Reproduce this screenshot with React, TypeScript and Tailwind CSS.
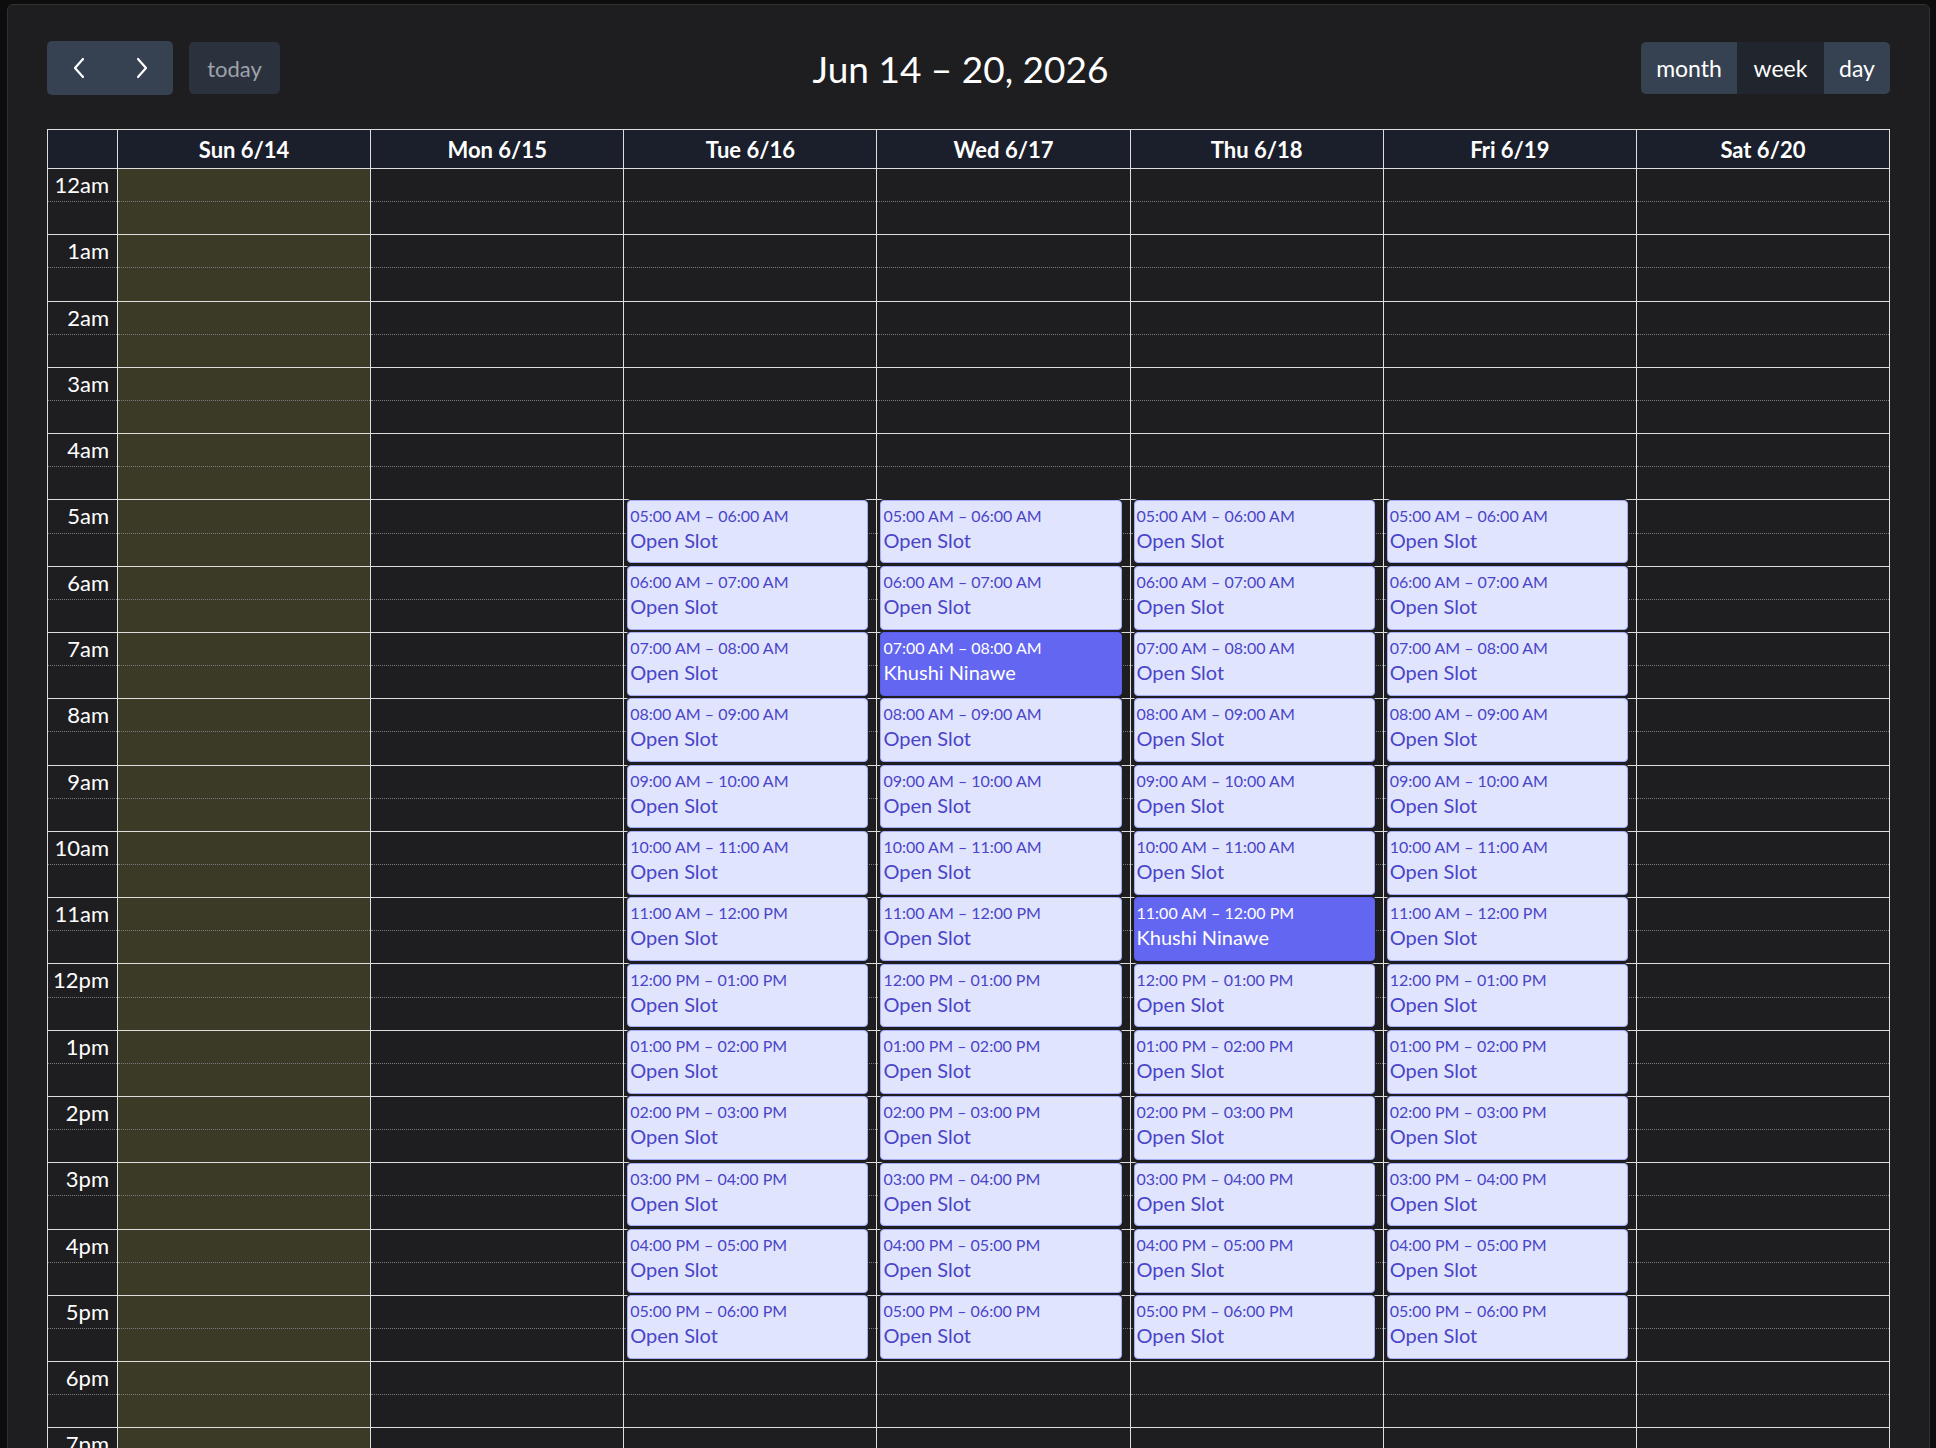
import React from "react";

const days = ["Sun 6/14", "Mon 6/15", "Tue 6/16", "Wed 6/17", "Thu 6/18", "Fri 6/19", "Sat 6/20"];
const SLOT = 33.15;
const HOUR = SLOT * 2;

function hourLabel(h: number) {
  const n = h % 12 === 0 ? 12 : h % 12;
  return `${n}${h < 12 ? "am" : "pm"}`;
}
function fmt(h: number) {
  const n = h % 12 === 0 ? 12 : h % 12;
  return `${String(n).padStart(2, "0")}:00 ${h < 12 || h === 24 ? "AM" : "PM"}`;
}

type Ev = { h: number; title: string; booked: boolean };

function eventsFor(col: number): Ev[] {
  if (col < 2 || col > 5) return [];
  const list: Ev[] = [];
  for (let h = 5; h <= 17; h++) {
    const booked = (col === 3 && h === 7) || (col === 4 && h === 11);
    list.push({ h, title: booked ? "Khushi Ninawe" : "Open Slot", booked });
  }
  return list;
}

function Slots() {
  const rows = [];
  for (let i = 0; i < 48; i++) {
    rows.push(
      <div
        key={i}
        className={
          i % 2 === 0
            ? "border-b border-dotted border-[#7a7a7a]"
            : "border-b border-solid border-[#dddddd]"
        }
        style={{ height: SLOT }}
      />
    );
  }
  return <>{rows}</>;
}

function Chevron({ dir }: { dir: "left" | "right" }) {
  return (
    <svg width="16" height="24" viewBox="0 0 16 24" fill="none">
      <path
        d={dir === "left" ? "M12 3 L4 12 L12 21" : "M4 3 L12 12 L4 21"}
        stroke="white"
        strokeWidth="2.2"
        strokeLinecap="round"
        strokeLinejoin="round"
      />
    </svg>
  );
}

export default function App() {
  return (
    <div
      className="min-h-screen bg-[#0d0d0e] pt-[4px] pl-[7px] pr-[6px]"
      style={{ fontFamily: "Lato, 'Open Sans', sans-serif" }}
    >
      <div className="min-h-[1444px] rounded-t-[6px] border border-[#313133] bg-[#1e1e20] pl-[39px] pr-[39px] pt-[36px] text-white">
        {/* Toolbar */}
        <div className="flex h-[54px] items-center justify-between">
          <div className="flex items-center gap-[16px]">
            <div className="flex h-[54px] w-[126px] overflow-hidden rounded-[5px] bg-[#364152]">
              <button className="flex w-1/2 items-center justify-center">
                <Chevron dir="left" />
              </button>
              <button className="flex w-1/2 items-center justify-center">
                <Chevron dir="right" />
              </button>
            </div>
            <button className="flex h-[52px] w-[91px] items-center justify-center rounded-[5px] bg-[#2c323d] text-[22px] text-[#9ea3ab]">
              today
            </button>
          </div>
          <h2 className="text-[37px] font-normal leading-none text-white">Jun 14 – 20, 2026</h2>
          <div className="flex h-[52px] overflow-hidden rounded-[5px] text-[23px] text-white">
            <button className="flex w-[96px] items-center justify-center bg-[#364152]">month</button>
            <button className="flex w-[87px] items-center justify-center bg-[#21262e]">week</button>
            <button className="flex w-[66px] items-center justify-center bg-[#364152]">day</button>
          </div>
        </div>

        {/* Calendar */}
        <div className="mt-[34px] border-l border-t border-r border-[#dddddd]">
          {/* Header */}
          <div className="flex h-[39px] border-b border-[#dddddd] bg-[#1b1f2c]">
            <div className="w-[70px] shrink-0 border-r border-[#dddddd]" />
            {days.map((d, i) => (
              <div
                key={d}
                className={`flex flex-1 items-center justify-center text-[22px] font-bold text-white ${
                  i < 6 ? "border-r border-[#dddddd]" : ""
                }`}
              >
                {d}
              </div>
            ))}
          </div>
          {/* Body */}
          <div className="flex">
            <div className="w-[70px] shrink-0 border-r border-[#dddddd]">
              {Array.from({ length: 24 }).map((_, h) => (
                <div key={h}>
                  <div
                    className="flex items-center justify-end border-b border-dotted border-[#7a7a7a] pr-[8px] text-[22px] leading-none text-white"
                    style={{ height: SLOT }}
                  >
                    {hourLabel(h)}
                  </div>
                  <div className="border-b border-solid border-[#dddddd]" style={{ height: SLOT }} />
                </div>
              ))}
            </div>
            {days.map((d, i) => (
              <div
                key={d}
                className={`relative min-w-0 flex-1 ${i < 6 ? "border-r border-[#dddddd]" : ""} ${
                  i === 0 ? "bg-[#3b3a27]" : ""
                }`}
              >
                <Slots />
                {eventsFor(i).map((ev) => (
                  <div
                    key={ev.h}
                    className={`absolute left-[3px] right-[8px] overflow-hidden rounded-[4px] border px-[2px] pt-[3px] shadow-[0_0_0_1px_#1e1e20] ${
                      ev.booked
                        ? "border-[#5b5ee6] bg-[#6366f1] text-white"
                        : "border-[#a3acf5] bg-[#e0e5fd] text-[#4a44c8]"
                    }`}
                    style={{ top: ev.h * HOUR - 1, height: HOUR - 2.5 }}
                  >
                    <div className="whitespace-nowrap text-[16px] leading-[23px]">
                      {fmt(ev.h)} – {fmt(ev.h + 1)}
                    </div>
                    <div className="whitespace-nowrap text-[20px] leading-[26px]">{ev.title}</div>
                  </div>
                ))}
              </div>
            ))}
          </div>
        </div>
      </div>
    </div>
  );
}
